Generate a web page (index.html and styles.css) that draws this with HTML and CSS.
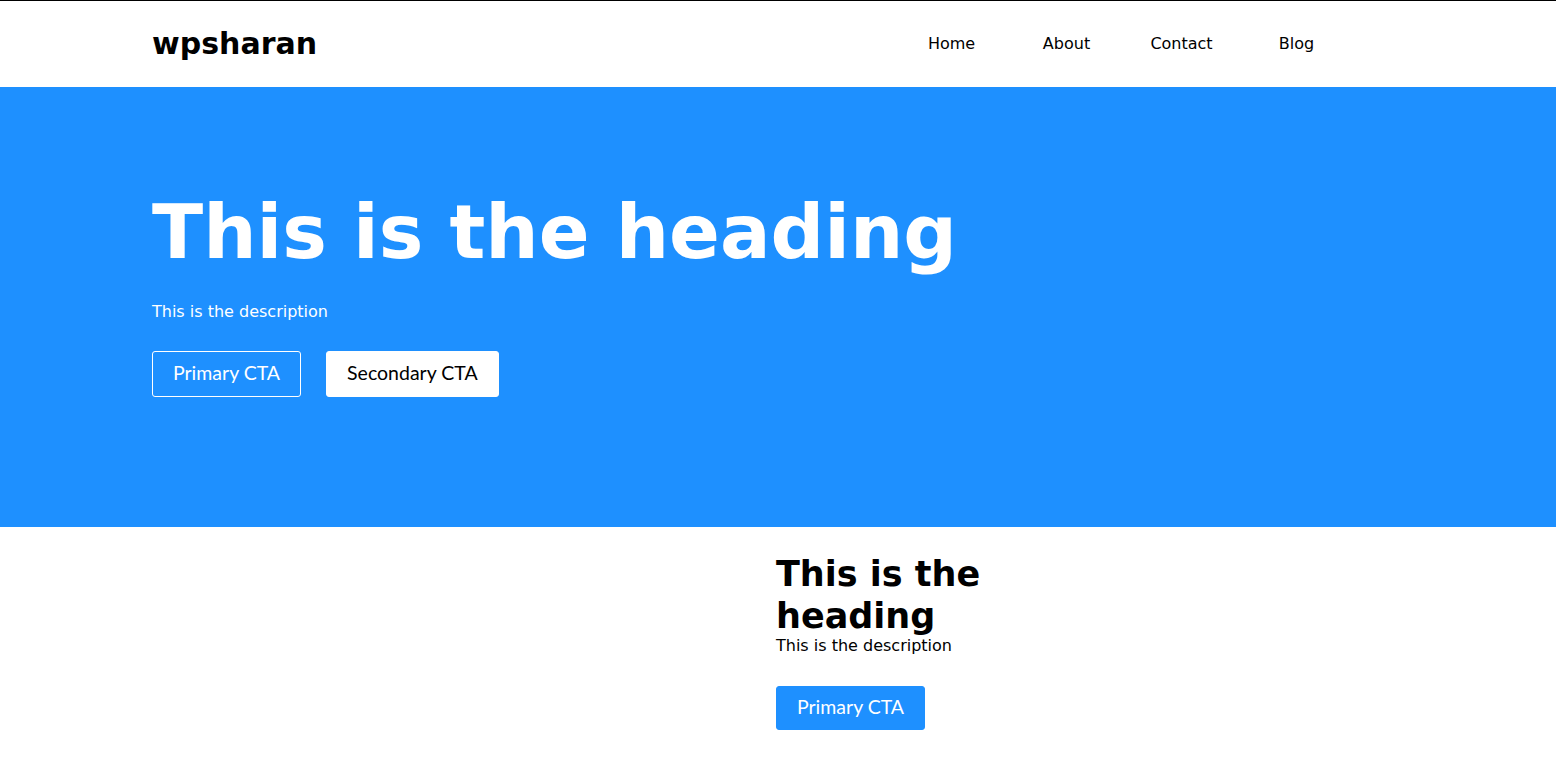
FILE: index.html
```html
<!DOCTYPE html>
<html lang="en">
<head>
<meta charset="utf-8">
<title>wpsharan</title>
<link rel="stylesheet" href="styles.css">
</head>
<body>
<header class="site-header">
  <div class="container header-inner">
    <a class="logo" href="#">wpsharan</a>
    <nav class="nav">
      <a href="#">Home</a>
      <a href="#">About</a>
      <a href="#">Contact</a>
      <a href="#">Blog</a>
    </nav>
  </div>
</header>
<section class="hero">
  <div class="container">
    <h1 class="hero-title">This is the heading</h1>
    <p class="hero-desc">This is the description</p>
    <div class="hero-actions">
      <a class="btn btn-outline" href="#">Primary CTA</a>
      <a class="btn btn-white" href="#">Secondary CTA</a>
    </div>
  </div>
</section>
<section class="feature">
  <div class="container feature-grid">
    <div class="feature-media"></div>
    <div class="feature-body">
      <h2 class="feature-title">This is the heading</h2>
      <p class="feature-desc">This is the description</p>
      <a class="btn btn-blue" href="#">Primary CTA</a>
    </div>
  </div>
</section>
</body>
</html>
```

FILE: styles.css
```css
* { box-sizing: border-box; }
html, body { margin: 0; padding: 0; }
body {
  font-family: "DejaVu Sans", sans-serif;
  color: #000;
  background: #fff;
  border-top: 1px solid #000;
}
a { text-decoration: none; color: inherit; }
.container {
  width: 1252px;
  margin: 0 auto;
}
.site-header { height: 86px; }
.header-inner {
  height: 100%;
  display: flex;
  align-items: center;
  justify-content: space-between;
}
.logo {
  font-weight: 700;
  font-size: 30px;
  line-height: 35px;
  padding-bottom: 2px;
}
.nav {
  display: grid;
  grid-template-columns: repeat(4, 115px);
  margin-right: 50px;
  font-size: 16px;
}
.nav a { text-align: center; line-height: 20px; }
.hero {
  background: #1e90ff;
  color: #fff;
  padding: 100px 0 130px;
}
.hero-title {
  margin: 0;
  font-size: 75px;
  line-height: 90px;
  font-weight: 700;
}
.hero-desc {
  margin: 23px 0 0;
  font-size: 16px;
  line-height: 24px;
}
.hero-actions {
  display: flex;
  gap: 25px;
  margin-top: 27px;
}
.btn {
  display: inline-flex;
  align-items: center;
  justify-content: center;
  height: 46px;
  padding: 0 20px 3px;
  border: 1px solid transparent;
  border-radius: 3px;
  font-family: "Lato", sans-serif;
  font-size: 19.5px;
}
.btn-outline { border-color: #fff; color: #fff; }
.btn-white { background: #fff; border-color: #fff; color: #000; }
.feature { padding: 26px 0 30px; }
.feature-grid {
  display: grid;
  grid-template-columns: 624px 1fr;
}
.feature-body { max-width: 300px; }
.feature-title {
  margin: 0;
  font-size: 35px;
  line-height: 42px;
  font-weight: 700;
}
.feature-desc {
  margin: 0;
  font-size: 16px;
  line-height: 18px;
}
.btn-blue {
  margin-top: 31px;
  height: 44px;
  background: #1e90ff;
  border-color: #1e90ff;
  color: #fff;
}
```
